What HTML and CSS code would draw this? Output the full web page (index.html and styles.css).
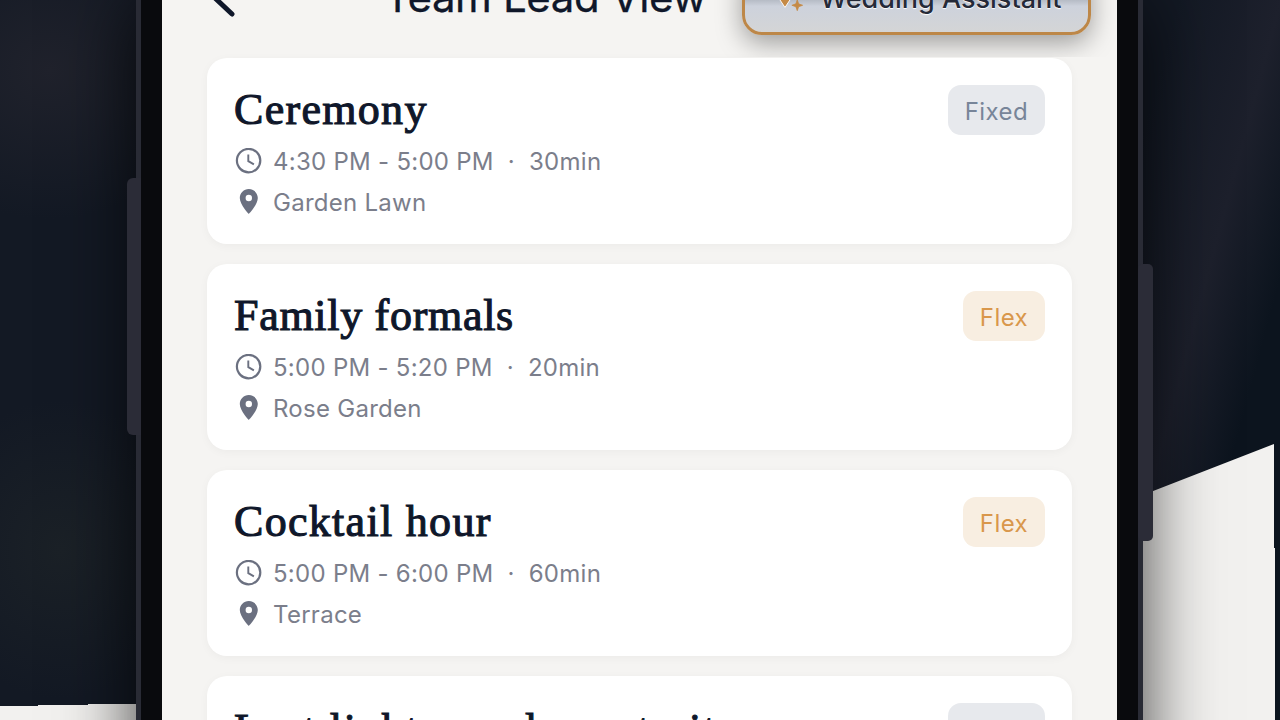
FILE: index.html
```html
<!DOCTYPE html>
<html lang="en">

<head>
    <meta charset="UTF-8">
    <title>Team Lead View</title>
    <link rel="stylesheet" href="styles.css">
</head>

<body>
    <svg class="backdrop" viewBox="0 0 1280 720">
        <polygon points="1130,500 1274,444 1274,548 1275,548 1275,720 1130,720" fill="#f2f1ef" />
        <polygon points="0,706 38,706 38,705 88,705 88,704 150,704 150,720 0,720" fill="#f2f1ef" />
    </svg>

    <svg width="0" height="0" class="symbols">
        <symbol id="clock" viewBox="0 0 28 28">
            <circle cx="14.6" cy="12.6" r="11.7" fill="none" stroke="currentColor" stroke-width="2.2" />
            <path d="M14.3 6.4v6.7l5.6 3.3" fill="none" stroke="currentColor" stroke-width="1.9" />
        </symbol>
        <symbol id="pin" viewBox="0 0 28 28">
            <path d="M14.8 0c-5 0-9 4-9 9C5.8 15.6 14.8 25 14.8 25S23.8 15.6 23.8 9c0-5-4-9-9-9zm0 12.2a3.2 3.2 0 1 1 0-6.4 3.2 3.2 0 0 1 0 6.4z" fill="currentColor" />
        </symbol>
    </svg>

    <div class="phone">
        <span class="side-button left"></span>
        <span class="side-button right"></span>
        <main class="screen">
            <header>
                <svg class="back" viewBox="0 0 32 44">
                    <path d="M25 38L8 22L25 6" fill="none" stroke="currentColor" stroke-width="5" stroke-linecap="round" stroke-linejoin="round" />
                </svg>
                <h1>Team Lead View</h1>
                <button class="assistant">
                    <svg class="sparkle" viewBox="0 0 36 36">
                        <path d="M9.5 3l4 9 10 4-8 3-6 9-6-9-8-3 10-4z" fill="#c58a46" stroke="#fff" stroke-width="1" />
                        <path d="M22.5 20l1.5 4.2 4.2 1.5-4.2 1.5-1.5 4.2-1.5-4.2-4.2-1.5 4.2-1.5z" fill="#c58a46" stroke="#c58a46" stroke-width="0.8" />
                    </svg>
                    Wedding Assistant
                </button>
            </header>

            <section class="events">
                <article class="card">
                    <div class="info">
                        <h2>Ceremony</h2>
                        <p><svg><use href="#clock" /></svg>4:30 PM - 5:00 PM<span class="dot">·</span>30min</p>
                        <p><svg><use href="#pin" /></svg>Garden Lawn</p>
                    </div>
                    <span class="badge fixed">Fixed</span>
                </article>
                <article class="card">
                    <div class="info">
                        <h2 class="formals">Family formals</h2>
                        <p><svg><use href="#clock" /></svg>5:00 PM - 5:20 PM<span class="dot">·</span>20min</p>
                        <p><svg><use href="#pin" /></svg>Rose Garden</p>
                    </div>
                    <span class="badge flex">Flex</span>
                </article>
                <article class="card">
                    <div class="info">
                        <h2>Cocktail hour</h2>
                        <p><svg><use href="#clock" /></svg>5:00 PM - 6:00 PM<span class="dot">·</span>60min</p>
                        <p><svg><use href="#pin" /></svg>Terrace</p>
                    </div>
                    <span class="badge flex">Flex</span>
                </article>
                <article class="card">
                    <div class="info">
                        <h2 class="portraits">Last light couple portraits</h2>
                    </div>
                    <span class="badge fixed">Fixed</span>
                </article>
            </section>
        </main>
    </div>
</body>

</html>
```
FILE: styles.css
```css
* {
    box-sizing: border-box;
}

body {
    margin: 0;
    height: 720px;
    overflow: hidden;
    background:
        radial-gradient(ellipse 130px 150px at 60px 550px, #1b2127, transparent),
        radial-gradient(ellipse 160px 150px at 50px 70px, #20222c, transparent),
        linear-gradient(105deg, #131924 0%, #131924 80%, #1d202c 87%, #0c141e 92%);
    font-family: "Inter", "Liberation Sans", sans-serif;
    color: #0f172a;
}

.backdrop {
    position: absolute;
    top: 0;
    left: 0;
    width: 1280px;
    height: 720px;
}

.symbols {
    position: absolute;
}

/* taller than the window so the shadow doesn't fade at the bottom */
.phone {
    position: relative;
    width: 1007px;
    height: 900px;
    margin-left: 136px;
    padding: 0 21px;
    background: #090a0d;
    border: solid #292b35;
    border-width: 0 5px;
    box-shadow: 0 0 70px rgba(0, 0, 0, 0.75);
}

.side-button {
    position: absolute;
    width: 15px;
    background: #2b2c37;
}

.side-button.left {
    left: -14px;
    width: 14px;
    top: 178px;
    height: 257px;
    border-radius: 6px 0 0 6px;
}

.side-button.right {
    right: -15px;
    top: 264px;
    height: 277px;
    border-radius: 5px;
}

.screen {
    height: 720px;
    overflow: hidden;
    background: #f5f4f2;
}

header {
    display: flex;
    align-items: center;
    height: 118px;
    margin-top: -61px;
    padding: 0 26px 0 45px;
    overflow: hidden;
}

.back {
    width: 32px;
    height: 44px;
}

h1 {
    margin: 0 0 0 145px;
    padding-bottom: 3px;
    width: 358px;
    font-size: 42px;
    font-weight: 400;
    letter-spacing: -0.4px;
    -webkit-text-stroke: 0.3px #0f172a;
    white-space: nowrap;
}

.assistant {
    display: flex;
    align-items: center;
    flex: none;
    width: 349px;
    height: 74px;
    padding: 0 0 0 31px;
    gap: 10px;
    border: 3px solid #bd8748;
    border-radius: 20px;
    background: linear-gradient(#8f98a8 0%, #aeb4be 50%, #cdd2dc 62%, #d4d5d6 100%);
    box-shadow: 0 8px 26px rgba(0, 0, 0, 0.36);
    color: #252a38;
    font: 500 27px "Inter", sans-serif;
    text-shadow: 0 1px 1px #fff;
    white-space: nowrap;
}

.sparkle {
    width: 34px;
    height: 34px;
}

.events {
    display: flex;
    flex-direction: column;
    gap: 20px;
    padding: 1px 45px 0;
}

.card {
    display: flex;
    justify-content: space-between;
    align-items: flex-start;
    flex: none;
    height: 186px;
    padding: 27px;
    border-radius: 20px;
    background: #fff;
    box-shadow: 0 2px 10px rgba(30, 30, 20, 0.04);
}

h2 {
    margin: 0 0 6px;
    font-family: "Liberation Serif", serif;
    font-size: 44px;
    font-weight: 400;
    line-height: 50px;
    letter-spacing: 1.3px;
    -webkit-text-stroke: 1.1px #0f172a;
    white-space: nowrap;
}

h2.formals {
    letter-spacing: 0.7px;
}

h2.portraits {
    line-height: 54px;
    letter-spacing: 1.8px;
}

.info p {
    display: flex;
    align-items: center;
    height: 41px;
    margin: 0;
    color: #7b7e8b;
    font-size: 24px;
    letter-spacing: 0.27px;
}

.info svg {
    width: 28px;
    height: 28px;
    margin-right: 11px;
    color: #6b7080;
}

.dot {
    margin: 0 14px;
}

.badge {
    height: 50px;
    padding: 0 17px;
    border-radius: 13px;
    font-size: 24px;
    line-height: 53px;
    letter-spacing: 0.4px;
}

.badge.fixed {
    background: #e7e9ed;
    color: #788599;
}

.badge.flex {
    background: #f8eee1;
    color: #d9974b;
}
```
